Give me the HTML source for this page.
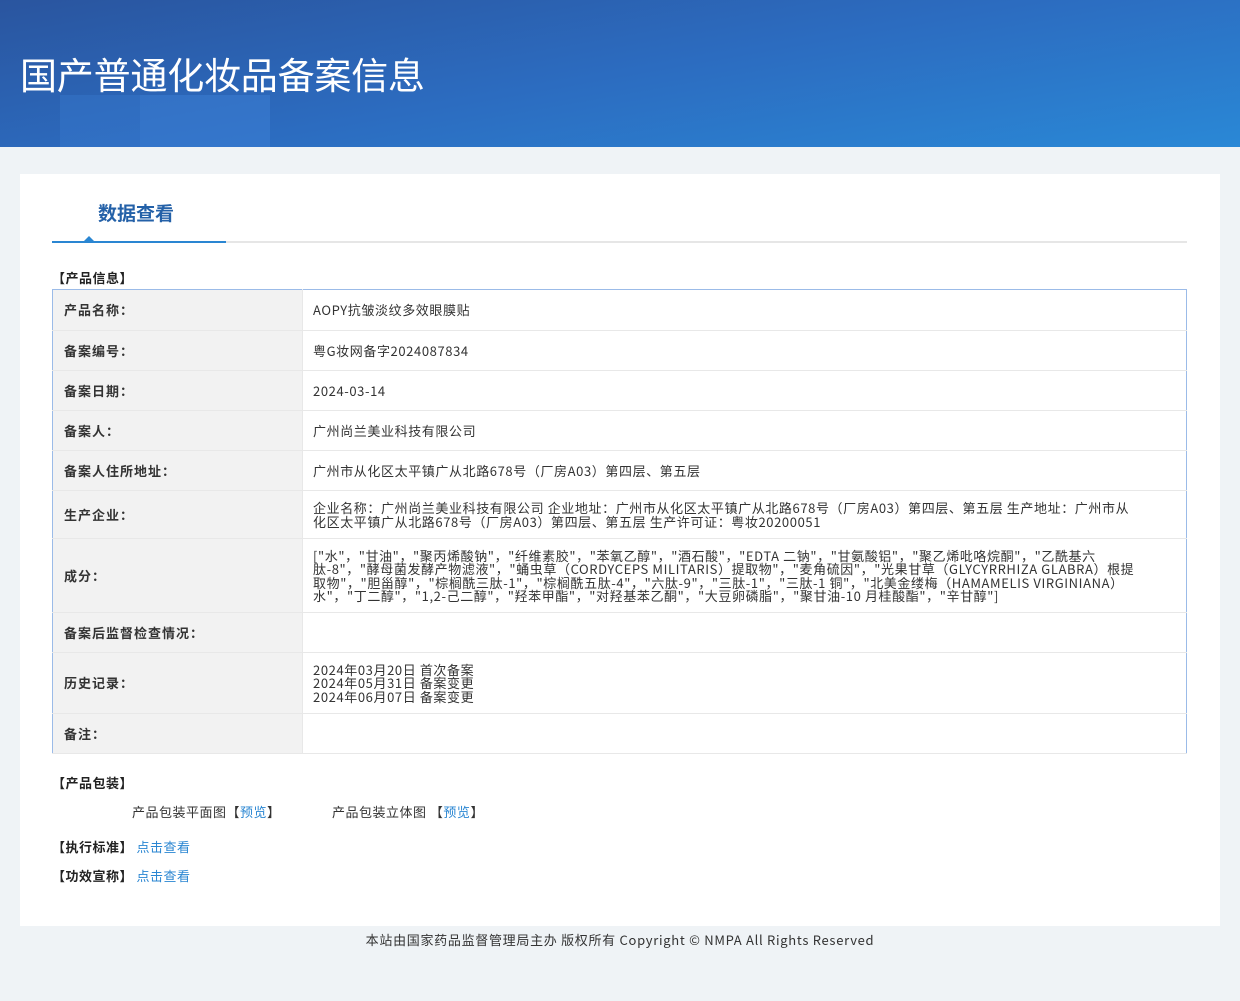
<!DOCTYPE html>
<html><head><meta charset="utf-8"><style>
*{margin:0;padding:0;box-sizing:border-box}
body{width:1240px;height:1001px;background:#eff3f6;font-family:"Noto Sans CJK SC","Liberation Sans",sans-serif;color:#333;font-size:14px;position:relative;overflow:hidden}
.hd{position:absolute;left:0;top:0;width:1240px;height:147px;background:linear-gradient(170deg,#2a559f 0%,#2c6cc0 50%,#2a88d6 100%);overflow:hidden}
.hd .b1{position:absolute;left:60px;top:95px;width:80px;height:52px;background:#3a7bd0;opacity:.4}
.hd .b2{position:absolute;left:140px;top:95px;width:130px;height:52px;background:#3b80d6;opacity:.5}
.hd h1{position:absolute;left:20px;top:48px;font-size:37px;line-height:50px;font-weight:normal;color:#fff;letter-spacing:-0.2px}
.card{position:absolute;left:20px;top:174px;width:1200px;height:752px;background:#fff}
.tab{position:absolute;left:78px;top:26px;font-size:19px;line-height:26px;font-weight:bold;color:#2461a8}
.line{position:absolute;left:32px;top:67px;width:1135px;height:2px;background:#e6e6e6}
.line i{position:absolute;left:0;top:0;width:174px;height:2px;background:#2a86d2}
.line b{position:absolute;left:32px;top:-5px;border:5px solid transparent;border-bottom:5px solid #2a86d2;border-top:0}
.sec{position:absolute;left:32px;font-size:13px;line-height:16px;font-weight:bold;color:#222;letter-spacing:0.5px}
table{position:absolute;left:32px;top:115px;width:1135px;border-collapse:collapse;border:1px solid #9bbbe8}
td{border-bottom:1px solid #e8e8e8;font-size:13px;line-height:13.5px;vertical-align:middle;letter-spacing:0.6px}
td.l{width:250px;background:#f2f2f2;font-weight:bold;padding-left:11px;border-right:1px solid #e8e8e8;letter-spacing:1px}
td.v{padding-left:10px;padding-right:50px}
a{color:#2a86d2;text-decoration:none}
.ft{position:absolute;top:931px;left:0;width:1240px;text-align:center;font-size:13px;line-height:18px;color:#333;letter-spacing:0.7px}
</style></head><body>
<div class="hd"><div class="b1"></div><div class="b2"></div><h1>国产普通化妆品备案信息</h1></div>
<div class="card">
<div class="tab">数据查看</div>
<div class="line"><i></i><b></b></div>
<div class="sec" style="top:96px">【产品信息】</div>
<table>
<tr style="height:41px"><td class="l">产品名称：</td><td class="v">AOPY抗皱淡纹多效眼膜贴</td></tr>
<tr style="height:40px"><td class="l">备案编号：</td><td class="v">粤G妆网备字2024087834</td></tr>
<tr style="height:40px"><td class="l">备案日期：</td><td class="v">2024-03-14</td></tr>
<tr style="height:40px"><td class="l">备案人：</td><td class="v">广州尚兰美业科技有限公司</td></tr>
<tr style="height:40px"><td class="l">备案人住所地址：</td><td class="v">广州市从化区太平镇广从北路678号（厂房A03）第四层、第五层</td></tr>
<tr style="height:48px"><td class="l">生产企业：</td><td class="v">企业名称：广州尚兰美业科技有限公司 企业地址：广州市从化区太平镇广从北路678号（厂房A03）第四层、第五层 生产地址：广州市从化区太平镇广从北路678号（厂房A03）第四层、第五层 生产许可证：粤妆20200051</td></tr>
<tr style="height:74px"><td class="l">成分：</td><td class="v">["水"，"甘油"，"聚丙烯酸钠"，"纤维素胶"，"苯氧乙醇"，"酒石酸"，"EDTA 二钠"，"甘氨酸铝"，"聚乙烯吡咯烷酮"，"乙酰基六肽-8"，"酵母菌发酵产物滤液"，"蛹虫草（CORDYCEPS MILITARIS）提取物"，"麦角硫因"，"光果甘草（GLYCYRRHIZA GLABRA）根提取物"，"胆甾醇"，"棕榈酰三肽-1"，"棕榈酰五肽-4"，"六肽-9"，"三肽-1"，"三肽-1 铜"，"北美金缕梅（HAMAMELIS VIRGINIANA）水"，"丁二醇"，"1,2-己二醇"，"羟苯甲酯"，"对羟基苯乙酮"，"大豆卵磷脂"，"聚甘油-10 月桂酸酯"，"辛甘醇"]</td></tr>
<tr style="height:40px"><td class="l">备案后监督检查情况：</td><td class="v"></td></tr>
<tr style="height:61px"><td class="l">历史记录：</td><td class="v">2024年03月20日 首次备案<br>2024年05月31日 备案变更<br>2024年06月07日 备案变更</td></tr>
<tr style="height:40px"><td class="l">备注：</td><td class="v"></td></tr>
</table>
<div class="sec" style="top:601px">【产品包装】</div>
<div style="position:absolute;left:112px;top:630px;font-size:13px;line-height:16px;letter-spacing:0.5px">产品包装平面图【<a>预览</a>】</div>
<div style="position:absolute;left:312px;top:630px;font-size:13px;line-height:16px;letter-spacing:0.5px">产品包装立体图 【<a>预览</a>】</div>
<div class="sec" style="top:665px">【执行标准】 <a style="font-weight:normal">点击查看</a></div>
<div class="sec" style="top:694px">【功效宣称】 <a style="font-weight:normal">点击查看</a></div>
</div>
<div class="ft">本站由国家药品监督管理局主办 版权所有 Copyright © NMPA All Rights Reserved</div>
</body></html>
